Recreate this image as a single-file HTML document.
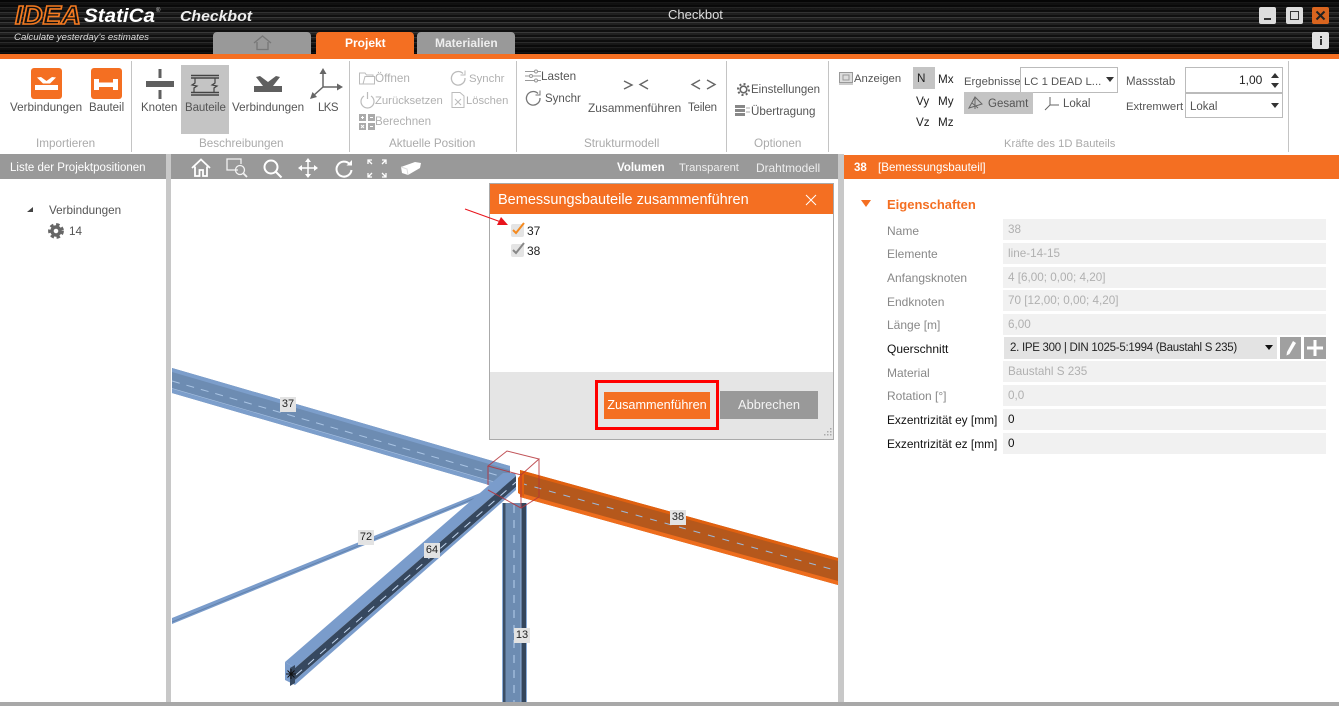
<!DOCTYPE html>
<html><head><meta charset="utf-8"><style>
*{box-sizing:border-box}
html,body{margin:0;padding:0;width:1339px;height:706px;overflow:hidden;background:#fff}
body{position:relative;font-family:"Liberation Sans",sans-serif;font-size:11.7px;color:#555}
.t{position:absolute;white-space:nowrap;line-height:14px;margin-top:1px}
.b{position:absolute}
.g{color:#aaa}
.d{color:#b0b0b0}
.k{color:#222}
.f{position:absolute;left:1003px;width:323px;height:21px;background:#f1f1f1;color:#b0b0b0;padding-left:5px;line-height:21px;white-space:nowrap}
.l{position:absolute;left:887px;color:#888;white-space:nowrap;line-height:14px;font-size:12px}
svg{position:absolute;overflow:visible}
.lab{position:absolute;background:#e3e3e3;color:#222;width:16px;height:15px;line-height:15px;text-align:center;font-size:11px}
</style></head><body>

<!-- Header -->
<div class="b" style="left:0;top:0;width:1339px;height:54px;background:repeating-linear-gradient(180deg,#111 0,#111 2px,#3c3c3c 2px,#3c3c3c 3px,#222 3px,#222 5px)"></div>
<div class="b" style="left:0;top:0;width:1339px;height:54px;background:linear-gradient(180deg,rgba(0,0,0,.7) 0,rgba(0,0,0,.05) 28%,rgba(0,0,0,.05) 68%,rgba(0,0,0,.75) 100%)"></div>
<div class="b" style="left:0;top:54px;width:1339px;height:5px;background:#f46f22"></div>

<svg style="left:0;top:0" width="260" height="54">
<text x="15" y="24" font-family="Liberation Sans" font-size="26" font-weight="bold" font-style="italic" fill="#111" stroke="#f47a20" stroke-width="1.6" textLength="66" lengthAdjust="spacingAndGlyphs">IDEA</text>
<text x="84" y="22" font-family="Liberation Sans" font-size="19" font-weight="bold" font-style="italic" fill="#fff" textLength="71" lengthAdjust="spacingAndGlyphs">StatiCa</text>
<text x="156" y="12" font-family="Liberation Sans" font-size="6" fill="#ccc">®</text>
<text x="180" y="21" font-family="Liberation Sans" font-size="15" font-weight="bold" font-style="italic" fill="#eee" textLength="72" lengthAdjust="spacingAndGlyphs">Checkbot</text>
<text x="14" y="40" font-family="Liberation Sans" font-size="9" font-style="italic" fill="#ddd" textLength="135" lengthAdjust="spacingAndGlyphs">Calculate yesterday's estimates</text>
</svg>

<div class="t" style="left:668px;top:7px;font-size:13px;color:#ddd">Checkbot</div>

<div class="b" style="left:213px;top:32px;width:98px;height:22px;background:#999;border-radius:4px 4px 0 0"></div>
<svg style="left:253px;top:35px" width="20" height="16" fill="none" stroke="#777" stroke-width="1.3"><path d="M1 8 L9.5 1 L18 8 M4 7 V14.5 H15 V7"/></svg>
<div class="b" style="left:316px;top:32px;width:98px;height:22px;background:#f46f22;border-radius:4px 4px 0 0"></div>
<div class="t" style="left:345px;top:35px;color:#fff;font-weight:bold;font-size:12px">Projekt</div>
<div class="b" style="left:417px;top:32px;width:98px;height:22px;background:#999;border-radius:4px 4px 0 0"></div>
<div class="t" style="left:435px;top:35px;color:#eee;font-weight:bold;font-size:12px">Materialien</div>

<!-- Window buttons -->
<div class="b" style="left:1259px;top:7px;width:17px;height:17px;background:#ddd;border-radius:2px"></div>
<div class="b" style="left:1264px;top:18px;width:7px;height:2px;background:#333"></div>
<div class="b" style="left:1286px;top:7px;width:17px;height:17px;background:#ddd;border-radius:2px"></div>
<div class="b" style="left:1290px;top:11px;width:9px;height:9px;border:1.5px solid #333"></div>
<div class="b" style="left:1312px;top:7px;width:17px;height:17px;background:#d9651f;border-radius:2px"></div>
<svg style="left:1312px;top:7px" width="17" height="17" stroke="#222" stroke-width="2"><path d="M4.5 4.5 L12.5 12.5 M12.5 4.5 L4.5 12.5"/></svg>
<div class="b" style="left:1312px;top:32px;width:17px;height:17px;background:#e2e2e2;border-radius:2px"></div>
<div class="b" style="left:1320px;top:36px;width:2px;height:2px;background:#333"></div>
<div class="b" style="left:1320px;top:39px;width:2px;height:6px;background:#333"></div>

<!-- Ribbon separators -->
<div class="b" style="left:131px;top:61px;width:1px;height:91px;background:#c4c4c4"></div>
<div class="b" style="left:349px;top:61px;width:1px;height:91px;background:#c4c4c4"></div>
<div class="b" style="left:516px;top:61px;width:1px;height:91px;background:#c4c4c4"></div>
<div class="b" style="left:726px;top:61px;width:1px;height:91px;background:#c4c4c4"></div>
<div class="b" style="left:828px;top:61px;width:1px;height:91px;background:#c4c4c4"></div>
<div class="b" style="left:1288px;top:61px;width:1px;height:91px;background:#c4c4c4"></div>

<!-- Importieren -->
<div class="b" style="left:31px;top:68px;width:31px;height:31px;background:#f46f22;border-radius:3px"></div>
<svg style="left:31px;top:68px" width="31" height="31" fill="#fff"><path d="M4 17 H27 V22 H4 Z M6 9.500 L10 9 L15.500 13 L21 9 L25 9.500 L19 15.500 H12 Z"/></svg>
<div class="b" style="left:91px;top:68px;width:31px;height:31px;background:#f46f22;border-radius:3px"></div>
<svg style="left:91px;top:68px" width="31" height="31" fill="#fff"><path d="M3 11 H8 V14.500 H22 V11 H27 V22 H22 V19 H8 V22 H3 Z"/></svg>
<div class="t" style="left:10px;top:100px">Verbindungen</div>
<div class="t" style="left:89px;top:100px;font-size:11.500px">Bauteil</div>
<div class="t g" style="left:36px;top:136px">Importieren</div>

<!-- Beschreibungen -->
<div class="b" style="left:181px;top:65px;width:48px;height:69px;background:#c4c4c4"></div>
<svg style="left:146px;top:69px" width="28" height="30" fill="#5f5f5f"><rect x="0" y="12" width="28" height="6"/><rect x="12.5" y="0" width="3" height="9"/><rect x="12.5" y="21" width="3" height="9"/></svg>
<svg style="left:190px;top:74px" width="30" height="24" fill="none" stroke="#444" stroke-width="1.2"><path d="M1 1.5 H29 M1 4 H29 M1 18.5 H29 M1 21 H29" stroke-width="1.6"/><path d="M5 4 V9 L2 11 L7 12 L4 14 V19 M25 4 V9 L22 11 L27 12 L24 14 V19"/></svg>
<svg style="left:254px;top:76px" width="28" height="17" fill="#5f5f5f"><path d="M0 10 H28 V16 H0 Z M2 1 L6 0 L14 6 L22 0 L26 1 L19 10 H9 Z"/></svg>
<svg style="left:310px;top:68px" width="33" height="32" fill="#666" stroke="#666" stroke-width="1.500"><path d="M13 19 V4 M13 19 H29 M13 19 L3 28" fill="none"/><path d="M13 0 L9.500 6 H16.500 Z M33 19 L27 15.500 V22.500 Z M0 31 L7 29 L2.500 24 Z" stroke="none"/></svg>
<div class="t" style="left:141px;top:100px;font-size:11.500px">Knoten</div>
<div class="t" style="left:185px;top:100px;font-size:11.500px;letter-spacing:-.1px">Bauteile</div>
<div class="t" style="left:232px;top:100px">Verbindungen</div>
<div class="t" style="left:318px;top:100px;font-size:11.500px;letter-spacing:-.6px">LKS</div>
<div class="t g" style="left:199px;top:136px">Beschreibungen</div>

<!-- Aktuelle Position -->
<svg style="left:359px;top:71px" width="16" height="14" fill="none" stroke="#bbb"><path d="M.5 13 V2 H6 L7.5 4 H14 V5.5 H6 L4 13 Z M.5 13 H15.5 V5.5 H14"/></svg>
<div class="t d" style="left:375px;top:71px">Öffnen</div>
<svg style="left:360px;top:92px" width="15" height="16" fill="none" stroke="#bbb" stroke-width="1.2"><path d="M4 4 A6.5 6.5 0 1 0 11 4 M7.5 0 V7"/></svg>
<div class="t d" style="left:375px;top:93px;font-size:11.300px">Zurücksetzen</div>
<svg style="left:359px;top:114px" width="16" height="16" fill="#aaa"><rect width="7" height="7"/><rect x="9" width="7" height="7"/><rect y="9" width="7" height="7"/><rect x="9" y="9" width="7" height="7"/><path d="M2 3.5H5M3.5 2V5M11 3.5H14M2 11L5 14M5 11L2 14M11 12.5H14" stroke="#fff"/></svg>
<div class="t d" style="left:375px;top:114px;font-size:11.600px">Berechnen</div>
<svg style="left:450px;top:70px" width="16" height="16" fill="none" stroke="#bbb" stroke-width="1.3"><path d="M13 3.5 A6.8 6.8 0 1 0 15 8"/><path d="M15 .5 V5 H10.5" stroke-width="1"/></svg>
<div class="t d" style="left:469px;top:71px;font-size:11.400px">Synchr</div>
<svg style="left:451px;top:92px" width="14" height="16" fill="none" stroke="#bbb"><path d="M1 .5 H9 L13 4 V15.5 H1 Z M4 7 L10 13 M10 7 L4 13"/></svg>
<div class="t d" style="left:466px;top:93px;font-size:11.200px">Löschen</div>
<div class="t g" style="left:389px;top:136px">Aktuelle Position</div>

<!-- Strukturmodell -->
<svg style="left:525px;top:69px" width="17" height="14" fill="none" stroke="#999"><path d="M0 2.5H16M0 7H16M0 11.5H16"/><circle cx="11" cy="2.5" r="1.5" fill="#fff"/><circle cx="6" cy="7" r="1.5" fill="#fff"/><circle cx="11" cy="11.5" r="1.5" fill="#fff"/></svg>
<div class="t" style="left:541px;top:69px">Lasten</div>
<svg style="left:525px;top:90px" width="16" height="16" fill="none" stroke="#777" stroke-width="1.3"><path d="M13 3.5 A6.8 6.8 0 1 0 15 8"/><path d="M15 .5 V5 H10.5" stroke-width="1"/></svg>
<div class="t" style="left:545px;top:91px;font-size:11.500px">Synchr</div>
<svg style="left:623px;top:79px" width="26" height="12" fill="none" stroke="#666" stroke-width="1.4"><path d="M1 2 L9 6 L1 10 M25 1 L17 5.500 L25 10"/></svg>
<svg style="left:691px;top:79px" width="25" height="12" fill="none" stroke="#666" stroke-width="1.4"><path d="M9 1 L1 5.500 L9 10 M16 1 L24 5.500 L16 10"/></svg>
<div class="t" style="left:588px;top:100px;font-size:11.900px">Zusammenführen</div>
<div class="t" style="left:688px;top:100px;font-size:11.500px;letter-spacing:-.2px">Teilen</div>
<div class="t g" style="left:584px;top:136px">Strukturmodell</div>

<!-- Optionen -->
<svg style="left:737px;top:83px" width="13" height="13" fill="none" stroke="#666" stroke-width="1.6"><circle cx="6.500" cy="6.500" r="3.300"/><circle cx="6.500" cy="6.500" r="5.500" stroke-dasharray="2 2.300" stroke-width="2"/></svg>
<div class="t" style="left:751px;top:82px;font-size:11.500px">Einstellungen</div>
<svg style="left:735px;top:105px" width="16" height="11" fill="#888"><rect width="10" height="3"/><rect y="4" width="10" height="3"/><rect y="8" width="10" height="3"/><path d="M11 3H15M11 7H15" stroke="#aaa"/></svg>
<div class="t" style="left:751px;top:104px;font-size:11.600px">Übertragung</div>
<div class="t g" style="left:754px;top:136px">Optionen</div>

<!-- Kräfte -->
<svg style="left:839px;top:72px" width="14" height="13" fill="none" stroke="#999"><rect x=".5" y=".5" width="13" height="10" fill="#ddd"/><rect x="4" y="3" width="6" height="5"/><path d="M0 12H14"/></svg>
<div class="t" style="left:854px;top:71px;font-size:11.300px">Anzeigen</div>
<div class="b" style="left:913px;top:67px;width:22px;height:22px;background:#c4c4c4"></div>
<div class="t k" style="left:917px;top:71px">N</div>
<div class="t k" style="left:938px;top:72px">Mx</div>
<div class="t k" style="left:916px;top:94px">Vy</div>
<div class="t k" style="left:938px;top:94px">My</div>
<div class="t k" style="left:916px;top:115px">Vz</div>
<div class="t k" style="left:938px;top:115px">Mz</div>
<div class="t" style="left:964px;top:74px;font-size:11.300px">Ergebnisse</div>
<div class="b" style="left:1020px;top:67px;width:98px;height:26px;border:1px solid #bbb;background:#fff"></div>
<div class="t" style="left:1024px;top:74px;font-size:11.300px">LC 1 DEAD L...</div>
<svg style="left:1106px;top:77px" width="9" height="6" fill="#333"><path d="M0 0H8L4 5Z"/></svg>
<div class="b" style="left:964px;top:92px;width:69px;height:22px;background:#c4c4c4"></div>
<svg style="left:968px;top:96px" width="16" height="15" fill="none" stroke="#666"><path d="M1 12 L7 1 L14 8 Z M4 7 L10 12 M7 1 L7 13"/></svg>
<div class="t" style="left:988px;top:96px;font-size:11.500px">Gesamt</div>
<svg style="left:1043px;top:96px" width="18" height="15" fill="none" stroke="#666"><path d="M7 1V9M7 9H16M7 9L2 14"/></svg>
<div class="t" style="left:1063px;top:96px;font-size:11.500px">Lokal</div>
<div class="t" style="left:1126px;top:74px;font-size:11.500px">Massstab</div>
<div class="b" style="left:1185px;top:67px;width:98px;height:26px;border:1px solid #bbb;background:#fff"></div>
<div class="t k" style="left:1239px;top:72px;font-size:12px">1,00</div>
<svg style="left:1271px;top:73px" width="9" height="15" fill="#333"><path d="M0 5H8L4 0Z M0 10H8L4 15Z"/></svg>
<div class="t" style="left:1126px;top:99px;font-size:11.300px">Extremwert</div>
<div class="b" style="left:1185px;top:93px;width:98px;height:25px;border:1px solid #bbb;background:#fff"></div>
<div class="t" style="left:1190px;top:99px;font-size:11.500px">Lokal</div>
<svg style="left:1271px;top:103px" width="9" height="6" fill="#333"><path d="M0 0H8L4 5Z"/></svg>
<div class="t g" style="left:1004px;top:136px;font-size:11.200px">Kräfte des 1D Bauteils</div>

<!-- Bars -->
<div class="b" style="left:0;top:154px;width:166px;height:25px;background:#999"></div>
<div class="b" style="left:166px;top:154px;width:5px;height:548px;background:#c8c8c8"></div>
<div class="b" style="left:171px;top:154px;width:667px;height:25px;background:#999"></div>
<div class="b" style="left:838px;top:154px;width:6px;height:548px;background:#c8c8c8"></div>
<div class="b" style="left:844px;top:155px;width:495px;height:24px;background:#f46f22"></div>
<div class="b" style="left:0;top:702px;width:1339px;height:4px;background:#a8a8a8"></div>

<div class="t" style="left:10px;top:160px;color:#fff;font-size:11.500px">Liste der Projektpositionen</div>
<div class="t" style="left:617px;top:160px;color:#fff;font-weight:bold;font-size:11.500px">Volumen</div>
<div class="t" style="left:679px;top:160px;color:#eee;font-size:11.200px">Transparent</div>
<div class="t" style="left:756px;top:160px;color:#eee;font-size:11.900px">Drahtmodell</div>

<!-- toolbar icons -->
<svg style="left:191px;top:158px" width="20" height="20" fill="none" stroke="#fff" stroke-width="1.800"><path d="M1 10 L10 1.500 L19 10 M4 8.500 V18 H8.500 V12 H12 V18 H16 V8.500"/></svg>
<svg style="left:226px;top:158px" width="23" height="20" fill="none" stroke="#f2f2f2" stroke-width="1.300"><path d="M12 12 H1 V1 H15 V6"/><circle cx="14" cy="12" r="4.500"/><path d="M17.500 15.500 L21 19" stroke-width="1.800"/></svg>
<svg style="left:263px;top:159px" width="20" height="20" fill="none" stroke="#fff" stroke-width="2"><circle cx="8" cy="8" r="6.500"/><path d="M13 13 L18.500 18.500"/></svg>
<svg style="left:298px;top:158px" width="20" height="20" fill="#fff" stroke="#fff"><path d="M10 3 V17 M3 10 H17" stroke-width="1.500" fill="none"/><path d="M10 0 L7 4 H13 Z M10 20 L7 16 H13 Z M0 10 L4 7 V13 Z M20 10 L16 7 V13 Z" stroke="none"/></svg>
<svg style="left:335px;top:160px" width="18" height="18" fill="none" stroke="#fff" stroke-width="2"><path d="M14.500 4 A7.500 7.500 0 1 0 16.500 10"/><path d="M11.500 5.500 H17 V0 Z" fill="#fff" stroke="none"/></svg>
<svg style="left:367px;top:159px" width="20" height="19" fill="none" stroke="#fff" stroke-width="1.300"><path d="M1 5V1H5M1 1L5 5M19 5V1H15M19 1L15 5M1 14V18H5M1 18L5 14M19 14V18H15M19 18L15 14"/></svg>
<svg style="left:401px;top:161px" width="21" height="15" fill="#fff"><path d="M0 6 L14 1 L20 2 L19 7 L7 14 L1 12 Z"/><path d="M0 6 L6 8 L7 14" fill="none" stroke="#ddd"/></svg>

<!-- Left tree -->
<svg style="left:27px;top:207px" width="7" height="6" fill="#444"><path d="M6 0V5H0Z"/></svg>
<div class="t" style="left:49px;top:203px;">Verbindungen</div>
<svg style="left:48px;top:223px" width="16" height="16" fill="none" stroke="#666"><circle cx="8" cy="8" r="4" stroke-width="3.400"/><circle cx="8" cy="8" r="6.600" stroke-width="2.600" stroke-dasharray="3.500 2.700"/></svg>
<div class="t" style="left:69px;top:224px;">14</div>

<!-- 3D viewport -->
<svg style="left:172px;top:179px" width="666" height="523" viewBox="172 179 666 523">
<defs><clipPath id="c"><rect x="172" y="179" width="666" height="523"/></clipPath></defs>
<g clip-path="url(#c)">
<!-- 37 -->
<polygon points="172,368 510,466 510,491 172,393" fill="#6d8cb2"/>
<polygon points="172,368 510,466 510,470 172,372" fill="#7c9ecb"/>
<polygon points="172,389 510,487 510,491 172,393" fill="#7c9ecb"/>
<line x1="172" y1="381" x2="510" y2="479" stroke="#a9c4e4" stroke-width="1" stroke-dasharray="8 7"/>
<line x1="172" y1="388.500" x2="510" y2="486.500" stroke="#a4bfe2" stroke-width=".7"/>
<!-- 72 -->
<polygon points="172,618 490,489 492,493 172,624" fill="#7a9ccb"/>
<line x1="172" y1="622" x2="490" y2="492" stroke="#6383ad" stroke-width="1"/>
<!-- Column 13 -->
<rect x="502" y="503" width="25" height="199" fill="#6d8cb2"/>
<rect x="502" y="503" width="1" height="199" fill="#88abd8"/>
<rect x="503" y="503" width="2.500" height="199" fill="#3b4e66"/>
<rect x="521" y="503" width="5" height="199" fill="#34465c"/>
<rect x="520.500" y="503" width="1" height="199" fill="#8fb0da"/>
<rect x="526" y="503" width="1" height="199" fill="#88abd8"/>
<line x1="514" y1="505" x2="514" y2="702" stroke="#b6cfee" stroke-dasharray="8 7"/>
<!-- 38 -->
<polygon points="520,470 838,558 838,585 520,497" fill="#b5581c"/>
<polygon points="520,470 838,558 838,561 520,473" fill="#e0600f"/>
<polygon points="520,493 838,581 838,585 520,497" fill="#ee6d1d"/>
<line x1="520" y1="483" x2="838" y2="571" stroke="#9cb9d9" stroke-width="1" stroke-dasharray="7 8"/>
<polygon points="518,478 524,471 524,497 518,493" fill="#e0600f"/>
<!-- 64 -->
<polygon points="285,662 503,473 515,473 516,476 295,668" fill="#7a9ccb"/>
<polygon points="295,668 516,476 516,487 295,680" fill="#36485f"/>
<polygon points="295,680 516,487 516,490 295,685" fill="#7a9ccb"/>
<polygon points="285,662 295,668 295,685 285,680" fill="#7a9ccb"/>
<polygon points="290,668 295,665 295,683 290,686" fill="#36485f"/>
<line x1="296" y1="675" x2="516" y2="482" stroke="#c2d5ee" stroke-width="1" stroke-dasharray="8 8"/>
<path d="M286 674 H296 M291 669 V679 M287.500 670.500 L294.500 677.500 M294.500 670.500 L287.500 677.500" stroke="#111" stroke-width="1"/>
<!-- Cube -->
<path d="M488 466 L507 451 L539 459 L521 475 Z M488 466 V485 M539 459 V497 M521 475 V508 M488 490 L521 508 L539 497" fill="none" stroke="#b5343a" stroke-width="1" opacity=".85"/>
</g>
</svg>
<div class="lab" style="left:280px;top:397px">37</div>
<div class="lab" style="left:358px;top:530px">72</div>
<div class="lab" style="left:424px;top:543px">64</div>
<div class="lab" style="left:514px;top:628px">13</div>
<div class="lab" style="left:670px;top:510px">38</div>

<!-- Dialog -->
<div class="b" style="left:489px;top:183px;width:345px;height:257px;background:#fff;border:1px solid #aaa"></div>
<div class="b" style="left:490px;top:184px;width:343px;height:30px;background:#f46f22"></div>
<div class="t" style="left:498px;top:191px;color:#fff;font-size:14.500px;line-height:16px">Bemessungsbauteile zusammenführen</div>
<svg style="left:805px;top:194px" width="12" height="12" stroke="#fff" stroke-width="1"><path d="M1 1L11 11M11 1L1 11"/></svg>
<div class="b" style="left:511px;top:224px;width:13px;height:13px;background:#e4e4e4;border-radius:2px"></div>
<svg style="left:511px;top:222px" width="15" height="14" fill="none" stroke="#f58a1f" stroke-width="2"><path d="M2 8 L5 11 L13 1"/></svg>
<div class="t k" style="left:527px;top:223px;font-size:12px">37</div>
<div class="b" style="left:511px;top:244px;width:13px;height:13px;background:#e4e4e4;border-radius:2px"></div>
<svg style="left:511px;top:242px" width="15" height="14" fill="none" stroke="#888" stroke-width="2"><path d="M2 8 L5 11 L13 1"/></svg>
<div class="t k" style="left:527px;top:243px;font-size:12px">38</div>
<svg style="left:465px;top:209px" width="44" height="18"><path d="M0 0 L36 13" stroke="#e8141c" fill="none"/><path d="M43 16 L32 16 L36 8 Z" fill="#e8141c"/></svg>
<div class="b" style="left:490px;top:372px;width:343px;height:67px;background:#e5e5e5"></div>
<div class="b" style="left:595px;top:380px;width:124px;height:50px;border:3.500px solid #f00"></div>
<div class="b" style="left:604px;top:392px;width:106px;height:27px;background:#f46f22;color:#fff;text-align:center;line-height:27px;font-size:12.700px">Zusammenführen</div>
<div class="b" style="left:720px;top:391px;width:98px;height:28px;background:#999;color:#f4f4f4;text-align:center;line-height:28px;font-size:12.800px">Abbrechen</div>
<svg style="left:822px;top:428px" width="11" height="11" fill="#aaa"><rect x="8" y="0" width="1.500" height="1.500"/><rect x="5" y="3" width="1.500" height="1.500"/><rect x="8" y="3" width="1.500" height="1.500"/><rect x="2" y="6" width="1.500" height="1.500"/><rect x="5" y="6" width="1.500" height="1.500"/><rect x="8" y="6" width="1.500" height="1.500"/></svg>

<!-- Right panel -->
<div class="t" style="left:854px;top:160px;color:#fff;font-weight:bold;font-size:11.500px">38</div>
<div class="t" style="left:878px;top:160px;color:#fff;font-size:11.600px">[Bemessungsbauteil]</div>
<svg style="left:861px;top:200px" width="11" height="8" fill="#f46f22"><path d="M0 0H10L5 7Z"/></svg>
<div class="t" style="left:887px;top:197px;color:#f46f22;font-weight:bold;font-size:13px">Eigenschaften</div>

<div class="l" style="top:224px;">Name</div><div class="f" style="top:219px">38</div>
<div class="l" style="top:247px;">Elemente</div><div class="f" style="top:243px">line-14-15</div>
<div class="l" style="top:271px;">Anfangsknoten</div><div class="f" style="top:267px">4 [6,00; 0,00; 4,20]</div>
<div class="l" style="top:295px;">Endknoten</div><div class="f" style="top:290px">70 [12,00; 0,00; 4,20]</div>
<div class="l" style="top:318px;">Länge [m]</div><div class="f" style="top:314px">6,00</div>
<div class="l" style="top:342px;color:#111">Querschnitt</div>
<div class="b" style="left:1004px;top:337px;width:273px;height:22px;background:#e3e3e3;color:#222;padding-left:6px;line-height:22px;font-size:11.500px;letter-spacing:-.28px;white-space:nowrap">2. IPE 300 | DIN 1025-5:1994 (Baustahl S 235)</div>
<svg style="left:1265px;top:345px" width="9" height="6" fill="#111"><path d="M0 0H8L4 5Z"/></svg>
<div class="b" style="left:1280px;top:337px;width:21px;height:22px;background:#a0a0a0"></div>
<svg style="left:1280px;top:337px" width="21" height="22" fill="#fff"><path d="M7 15 L13 4 L16 6 L9.500 17 L6.500 18.500 Z"/></svg>
<div class="b" style="left:1304px;top:337px;width:22px;height:22px;background:#a0a0a0"></div>
<svg style="left:1304px;top:337px" width="22" height="22" fill="#fff"><path d="M9.500 3H12.500V9.500H19V12.500H12.500V19H9.500V12.500H3V9.500H9.500Z"/></svg>
<div class="l" style="top:366px;">Material</div><div class="f" style="top:361px">Baustahl S 235</div>
<div class="l" style="top:389px;">Rotation [°]</div><div class="f" style="top:385px">0,0</div>
<div class="l" style="top:413px;color:#111;font-size:11.900px">Exzentrizität ey [mm]</div><div class="f" style="top:409px;color:#111">0</div>
<div class="l" style="top:437px;color:#111;font-size:11.900px">Exzentrizität ez [mm]</div><div class="f" style="top:433px;color:#111">0</div>

</body></html>
